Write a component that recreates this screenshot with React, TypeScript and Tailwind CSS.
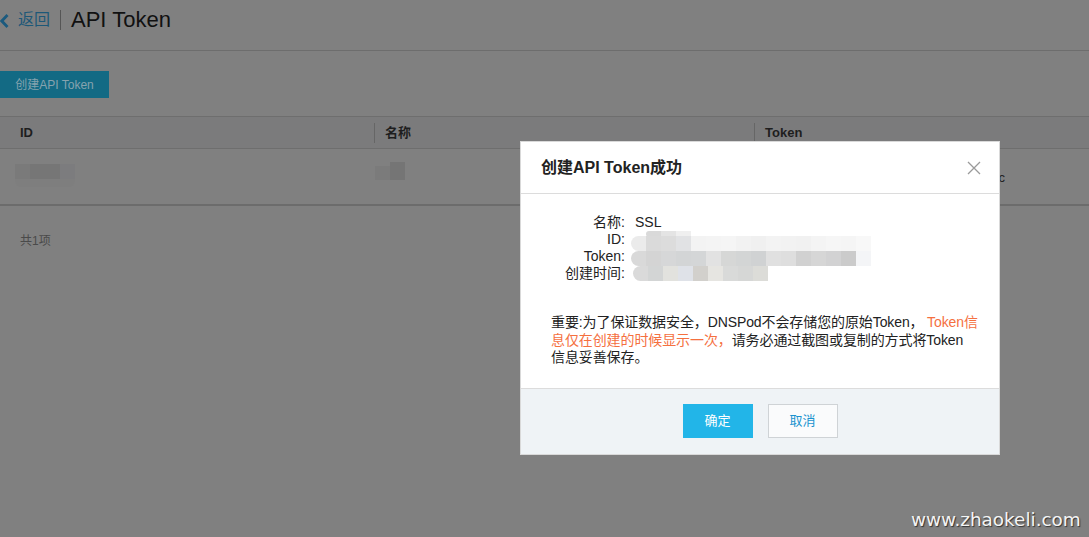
import React from "react";

const font = { fontFamily: '"Liberation Sans", "Noto Sans CJK SC", sans-serif' };

function Mosaic() {
  const rows: { top: number; left: number; h: number; colors: string[] }[] = [
    { top: 0, left: 15, h: 6, colors: ["#d9d9d9", "#e4e4e4", "#efefef"] },
    {
      top: 5,
      left: 0,
      h: 15,
      colors: ["#ebebeb", "#dadada", "#dcdcdc", "#e1e2e4", "#f3f3f3", "#f4f4f4", "#f5f5f5", "#f2f2f2", "#f0f0f0", "#f3f3f3", "#f2f2f2", "#f1f1f1", "#f4f4f4", "#f6f6f6", "#f5f5f5", "#f8f8f8"],
    },
    {
      top: 20,
      left: 0,
      h: 15,
      colors: ["#d9d9d9", "#d4d4d4", "#d6d7d8", "#d3d5d6", "#d4d6d7", "#e2e2e2", "#d6d7d6", "#d3d5d5", "#d0d2d3", "#e0e0e0", "#dedede", "#d1d1d1", "#d6d6d6", "#d2d2d3", "#cbcbcb", "#f4f5f7"],
    },
    {
      top: 35,
      left: 2,
      h: 15,
      colors: ["#dadada", "#d3d5d5", "#e2e2de", "#dfe2e8", "#d2d0cc", "#e6e5e1", "#d9dad9", "#d6d7d6", "#dcdcd8"],
    },
  ];
  return (
    <div className="absolute left-[110px] top-[37px] w-[260px] h-[52px]">
      {rows.map((r, i) => (
        <div key={i} className="absolute flex" style={{ top: r.top, left: r.left, height: r.h }}>
          {r.colors.map((c, j) => (
            <div
              key={j}
              className={j === 0 ? "w-[15px] h-full rounded-l-[8px]" : "w-[15px] h-full"}
              style={{ background: c }}
            />
          ))}
        </div>
      ))}
    </div>
  );
}

export default function App() {
  return (
    <div className="relative w-full h-[537px] overflow-hidden bg-[#808080]" style={font}>
      {/* Header */}
      <div className="h-[51px] border-b border-[#6d6d6d]">
        <div className="flex items-center h-[40px]">
          <svg width="10" height="16" viewBox="0 0 10 16" className="ml-0 mt-[1px]">
            <path d="M7.5 2 L1.8 8 L7.5 14" fill="none" stroke="#1b5a7e" strokeWidth="2.8" />
          </svg>
          <span className="ml-[8px] text-[16px] text-[#1d5878]">返回</span>
          <span className="ml-[10px] w-px h-[20px] bg-[#555]" />
          <span className="ml-[10px] text-[22px] text-[#111] leading-none">API Token</span>
        </div>
      </div>

      {/* Create button */}
      <div className="mt-[20px] flex">
        <div className="w-[109px] h-[27px] bg-[#136a84] text-[12px] text-[#86a3af] flex items-center justify-center">
          创建API Token
        </div>
      </div>

      {/* Table */}
      <div className="mt-[18px] border-t border-[#6e6e6e]">
        <div className="flex h-[32px] bg-[#7b7b7c] border-b border-[#6e6e6e] text-[13px] font-bold text-[#1e1e1e]">
          <div className="w-[374px] pl-[20px] flex items-center">ID</div>
          <div className="w-[380px] flex items-center">
            <span className="w-px h-[20px] bg-[#666]" />
            <span className="ml-[10px]">名称</span>
          </div>
          <div className="flex-1 flex items-center">
            <span className="w-px h-[20px] bg-[#666]" />
            <span className="ml-[10px]">Token</span>
          </div>
        </div>
        <div className="flex h-[57px] border-b-2 border-[#6c6c6c] text-[13px] text-[#222]">
          <div className="w-[374px] pl-[15px] pt-[15px]">
            <div className="flex h-[15px] w-[60px]">
              <div className="w-[15px] bg-[#7a7a7a]" />
              <div className="w-[30px] bg-[#767676]" />
              <div className="w-[15px] bg-[#7c7c7e]" />
            </div>
            <div className="h-[8px] w-[60px] bg-[#7e7e7e] rounded-b-[6px]" />
          </div>
          <div className="w-[380px] pt-[13px] pl-[1px]">
            <div className="flex items-end h-[18px]">
              <div className="w-[15px] h-[14px] bg-[#7b7b7b]" />
              <div className="w-[15px] h-[18px] bg-[#757575]" />
            </div>
          </div>
          <div className="flex-1 pl-[11px] pt-[2px] flex items-center whitespace-nowrap overflow-hidden">
            d5e1b2c4a7f8093e6b1d2c5a8f7e4b3a5fc
          </div>
        </div>
        <div className="pl-[20px] pt-[26px] text-[12px] text-[#4a4a4a]">共1项</div>
      </div>

      {/* Modal */}
      <div className="absolute left-[520px] top-[141px] w-[480px] h-[314px] bg-white border border-[#d9d9d9] flex flex-col">
        <div className="h-[52px] border-b border-[#dcdcdc] flex items-center justify-between pl-[20px] pr-[18px]">
          <span className="text-[16px] font-bold text-[#222]">创建API Token成功</span>
          <svg width="14" height="14" viewBox="0 0 14 14">
            <path d="M1 1 L13 13 M13 1 L1 13" stroke="#9a9a9a" strokeWidth="1.3" />
          </svg>
        </div>
        <div className="relative flex-1 pl-[30px] pr-[20px] pt-[20px] text-[14px] text-[#222]">
          <div className="flex flex-col leading-[17px]">
            {[
              ["名称:", "SSL"],
              ["ID:", ""],
              ["Token:", ""],
              ["创建时间:", ""],
            ].map(([k, v]) => (
              <div key={k} className="flex h-[17px]">
                <span className="w-[74px] text-right">{k}</span>
                <span className="ml-[10px]">{v}</span>
              </div>
            ))}
          </div>
          <Mosaic />
          <div className="mt-[32px] leading-[17.5px] whitespace-nowrap tracking-[-0.1px]">
            <div>
              重要:为了保证数据安全，DNSPod不会存储您的原始Token， <span className="text-[#f5703f]">Token信</span>
            </div>
            <div>
              <span className="text-[#f5703f]">息仅在创建的时候显示一次，</span>请务必通过截图或复制的方式将Token
            </div>
            <div>信息妥善保存。</div>
          </div>
        </div>
        <div className="h-[66px] bg-[#eff3f6] border-t border-[#dcdcdc] flex justify-center items-start pt-[15px] gap-[15px] text-[13px]">
          <div className="w-[70px] h-[34px] bg-[#22b5e8] text-white flex items-center justify-center">确定</div>
          <div className="w-[70px] h-[34px] bg-[#fafbfc] border border-[#cfd3d6] text-[#1a93cf] flex items-center justify-center">
            取消
          </div>
        </div>
      </div>

      {/* Watermark */}
      <div
        className="absolute left-[911px] top-[506px] text-[18.4px] text-[#f4f4f4] [text-shadow:1px_1px_1px_#333]"
        style={{ fontFamily: '"DejaVu Sans", sans-serif' }}
      >
        www.zhaokeli.com
      </div>
    </div>
  );
}
